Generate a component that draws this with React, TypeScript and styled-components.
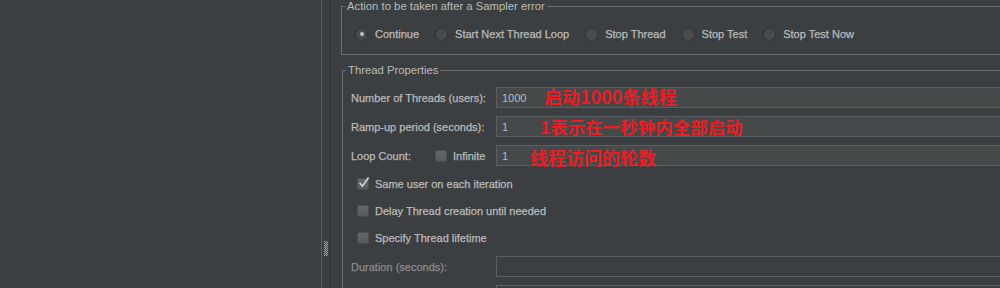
import React, {FC} from 'react';
import styled, {createGlobalStyle} from 'styled-components';

const GlobalStyle = createGlobalStyle`
    html, body {
        margin: 0;
        padding: 0;
        background: #3c3f41;
        overflow: hidden;
    }
    body {
        font-family: "Liberation Sans", Arial, sans-serif;
    }
`;

/** Radio button of the "sampler error" group */
const Radio: FC<{label: string; checked?: boolean}> = ({label, checked}) => (
    <RadioItem>
        <RadioCircle>{checked && <RadioDot />}</RadioCircle>
        <span>{label}</span>
    </RadioItem>
);

/** Checkbox with an optional check mark */
const Check: FC<{checked?: boolean}> = ({checked}) => (
    <CheckBox>
        {checked && (
            <svg width="14" height="14" viewBox="0 0 14 14">
                <path d="M2.6 6.8 L5.4 10.2 L11.6 1.6" fill="none" stroke="#d4d4d4" strokeWidth="1.7" />
            </svg>
        )}
    </CheckBox>
);

const errorActions = ['Continue', 'Start Next Thread Loop', 'Stop Thread', 'Stop Test', 'Stop Test Now'];

export default function App() {
    return (
        <>
            <GlobalStyle />
            <Screen>
                <TreePane />
                <Splitter>
                    <Grip>
                        <svg width="4" height="15" viewBox="0 0 4 15">
                            <defs>
                                <pattern id="grip" width="2" height="2" patternUnits="userSpaceOnUse">
                                    <rect width="1" height="1" fill="#a9abad" />
                                    <rect x="1" y="1" width="1" height="1" fill="#a9abad" />
                                </pattern>
                            </defs>
                            <rect width="4" height="15" fill="url(#grip)" />
                        </svg>
                    </Grip>
                </Splitter>
                <Form>
                    <Group>
                        <Legend>Action to be taken after a Sampler error</Legend>
                        <RadioRow>
                            {errorActions.map((a, i) => (
                                <Radio key={a} label={a} checked={i === 0} />
                            ))}
                        </RadioRow>
                    </Group>

                    <Group $inset={1} $top={9}>
                        <Legend>Thread Properties</Legend>
                        <Body>
                            <Rows>
                                <Row>
                                    <Label>Number of Threads (users):</Label>
                                    <Field>1000</Field>
                                    <Note $left={193} $size={18} $dy={-2}>启动1000条线程</Note>
                                </Row>
                                <Row>
                                    <Label>Ramp-up period (seconds):</Label>
                                    <Field>1</Field>
                                    <Note $left={189} $size={17.5} $dy={0}>1表示在一秒钟内全部启动</Note>
                                </Row>
                                <Row>
                                    <Label>
                                        <LoopText>Loop Count:</LoopText>
                                        <Check />
                                        <CheckText>Infinite</CheckText>
                                    </Label>
                                    <Field>1</Field>
                                    <Note $left={179} $size={18} $dy={1}>线程访问的轮数</Note>
                                </Row>
                            </Rows>

                            <Options>
                                <CheckRow>
                                    <Check checked />
                                    <CheckText>Same user on each iteration</CheckText>
                                </CheckRow>
                                <CheckRow>
                                    <Check />
                                    <CheckText>Delay Thread creation until needed</CheckText>
                                </CheckRow>
                                <CheckRow>
                                    <Check />
                                    <CheckText>Specify Thread lifetime</CheckText>
                                </CheckRow>
                            </Options>

                            <Rows $top={5}>
                                <Row>
                                    <Label $disabled>Duration (seconds):</Label>
                                    <Field $disabled />
                                </Row>
                                <Row>
                                    <Label $disabled />
                                    <Field $disabled />
                                </Row>
                            </Rows>
                        </Body>
                    </Group>
                </Form>
            </Screen>
        </>
    );
}

const Screen = styled.div`
    display: flex;
    width: 1000px;
    height: 288px;
    background: #3c3f41;
    overflow: hidden;
    color: #bbbbbb;
    font-size: 11px;
    -webkit-text-stroke: 0.25px currentColor;
`;

const TreePane = styled.div`
    flex: none;
    width: 322px;
    box-sizing: border-box;
    border-right: 1px solid #5d6062;
`;

const Splitter = styled.div`
    flex: none;
    width: 9px;
    box-sizing: border-box;
    border-right: 2px solid #333537;
    display: flex;
    flex-direction: column;
    padding: 241px 0 0 2px;
`;

const Grip = styled.div`
    display: flex;
`;

const Form = styled.div`
    flex: none;
    width: 760px;
    box-sizing: border-box;
    padding-left: 10px;
`;

const Group = styled.fieldset<{$inset?: number; $top?: number}>`
    margin: ${({$top}) => $top ?? 0}px 0 0 ${({$inset}) => $inset ?? 0}px;
    padding: 0;
    min-width: 0;
    border: 1px solid #6c6f71;
`;

const Legend = styled.legend`
    margin-left: 3px;
    padding: 0 2px;
    line-height: 13px;
    font-size: 11.3px;
    color: #bbbbbb;
    -webkit-text-stroke: 0;
`;

const RadioRow = styled.div`
    display: flex;
    align-items: center;
    gap: 16px;
    height: 16px;
    padding: 13px 0 12px 13px;
`;

const RadioItem = styled.label`
    display: flex;
    align-items: center;
    gap: 7px;
    white-space: nowrap;
`;

const RadioCircle = styled.span`
    width: 13px;
    height: 13px;
    box-sizing: border-box;
    border-radius: 50%;
    border: 1px solid #303234;
    background: radial-gradient(circle at 50% 45%, #45484a 0%, #4b4e50 70%, #55585a 100%);
    display: flex;
    align-items: center;
    justify-content: center;
`;

const RadioDot = styled.span`
    width: 4px;
    height: 4px;
    border-radius: 50%;
    background: #c2c2c2;
`;

const Body = styled.div`
    padding: 10px 0 0 8px;
`;

const Rows = styled.div<{$top?: number}>`
    display: flex;
    flex-direction: column;
    gap: 8px;
    margin-top: ${({$top}) => $top ?? 0}px;
`;

const Row = styled.div`
    position: relative;
    display: flex;
    align-items: center;
    height: 21px;
`;

const Label = styled.div<{$disabled?: boolean}>`
    flex: none;
    width: 145px;
    display: flex;
    align-items: center;
    white-space: nowrap;
    color: ${({$disabled}) => ($disabled ? '#8b8d8f' : '#bbbbbb')};
`;

const LoopText = styled.span`
    width: 84px;
`;

const Field = styled.div<{$disabled?: boolean}>`
    flex: 1;
    height: 21px;
    box-sizing: border-box;
    padding-left: 5px;
    display: flex;
    align-items: center;
    border: 1px solid #5d6062;
    background: ${({$disabled}) => ($disabled ? '#3c3f41' : '#45494a')};
    color: #bbbbbb;
    -webkit-text-stroke: 0;
`;

const Note = styled.span<{$left: number; $size: number; $dy?: number}>`
    position: absolute;
    left: ${({$left}) => $left}px;
    top: 50%;
    transform: translateY(calc(-50% + ${({$dy}) => $dy ?? 0}px));
    font-family: "Noto Sans CJK SC", "Liberation Sans", sans-serif;
    font-weight: 700;
    font-size: ${({$size}) => $size}px;
    line-height: 1;
    color: #ea1d25;
    white-space: nowrap;
    -webkit-text-stroke: 0;
`;

const CheckBox = styled.span`
    position: relative;
    flex: none;
    width: 12px;
    height: 12px;
    box-sizing: border-box;
    border-radius: 2px;
    border: 1px solid #4c4f51;
    background: linear-gradient(#64676a, #585b5d);

    svg {
        position: absolute;
        left: -1px;
        top: -3px;
    }
`;

const CheckText = styled.span`
    margin-left: 6px;
    white-space: nowrap;
`;

const Options = styled.div`
    display: flex;
    flex-direction: column;
    margin-top: 4px;
`;

const CheckRow = styled.div`
    display: flex;
    align-items: center;
    height: 27px;
    padding-left: 6px;
`;
